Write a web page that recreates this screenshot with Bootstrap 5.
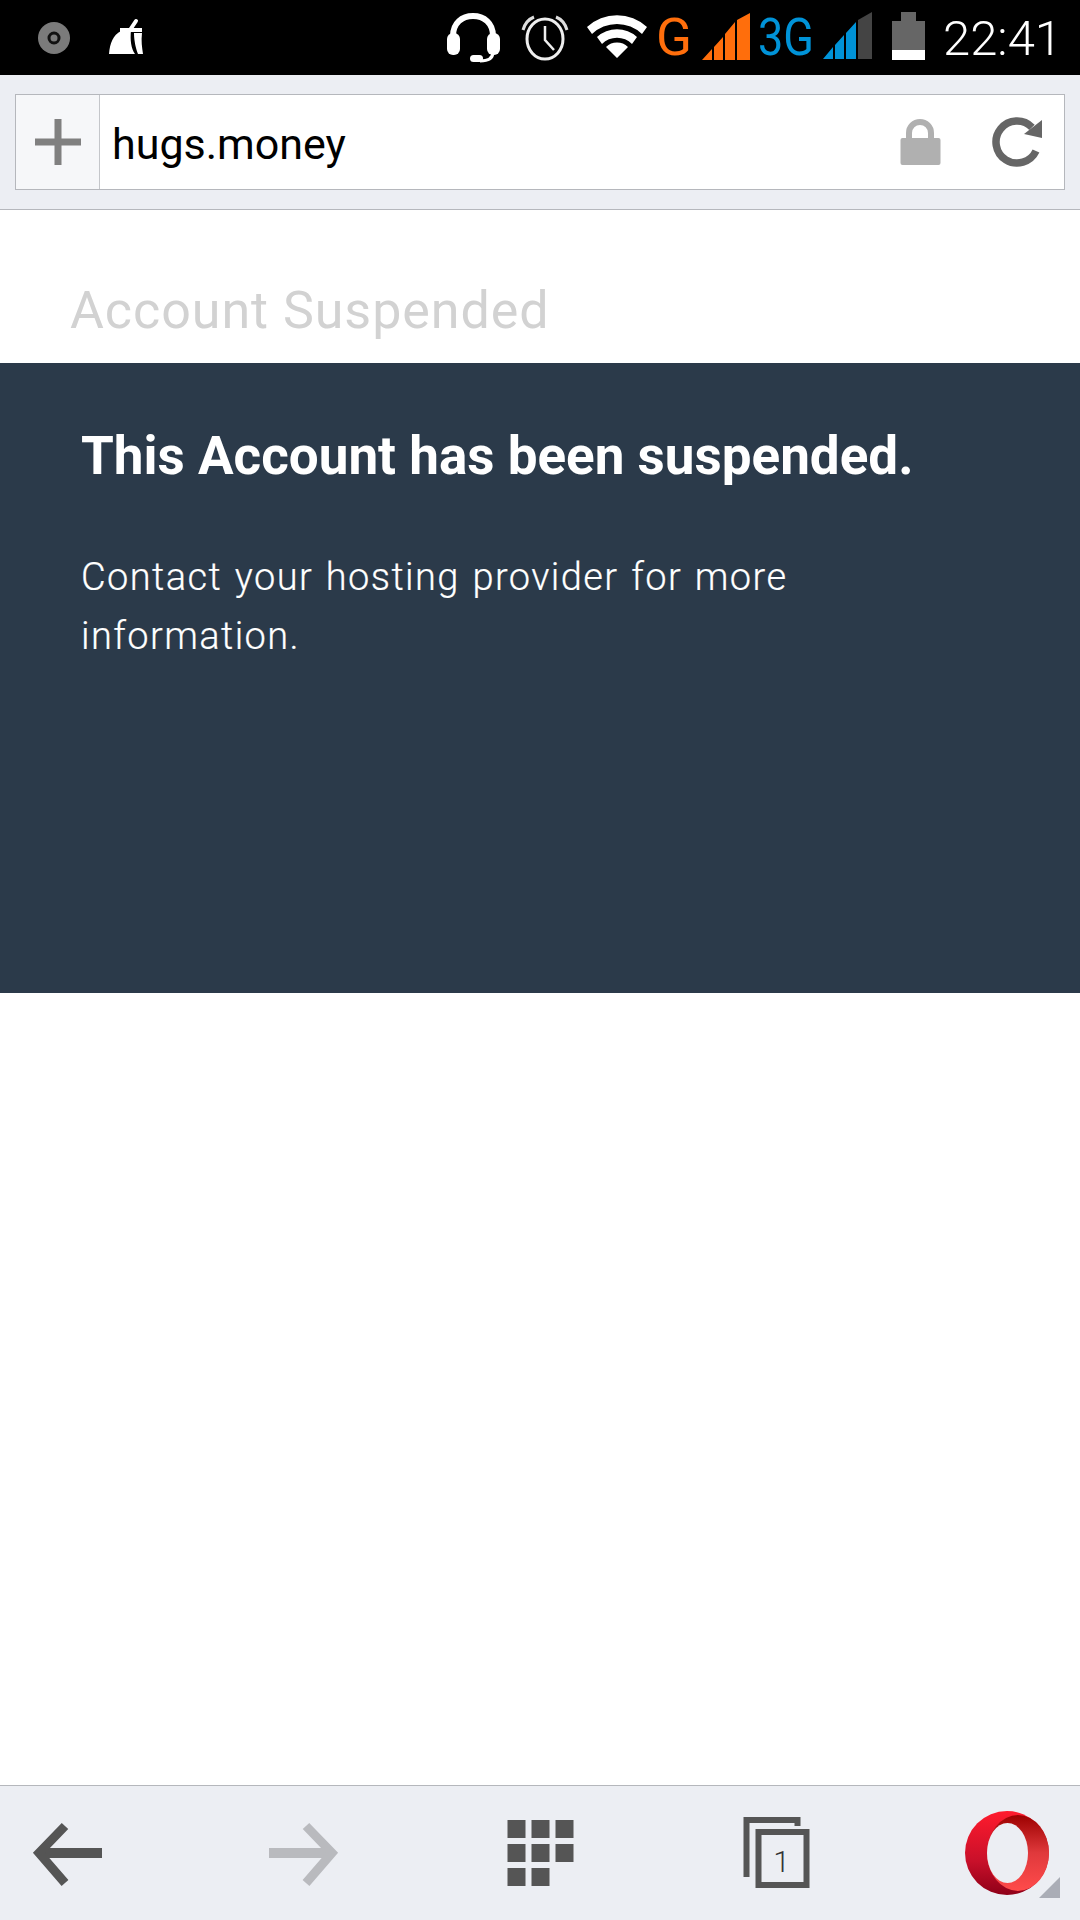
<!DOCTYPE html>
<html lang="en"><head><meta charset="utf-8"><title>hugs.money</title>
<link href="https://cdn.jsdelivr.net/npm/bootstrap@5.3.0/dist/css/bootstrap.min.css" rel="stylesheet">
<style>
body{font-family:Roboto,"Liberation Sans",sans-serif;background:#fff;}
.shell{height:1920px;}
.statusbar{height:75px;background:#000;color:#fff;}
.statusbar svg{display:block;flex:none;}
.clock{font-size:49px;font-weight:300;line-height:1;width:115px;margin-left:18px;margin-right:22px;white-space:nowrap;padding-top:2px;}
.topbar{height:135px;background:#eceef3;border-bottom:1px solid #b5b7bc;padding:19px 15px 20px;}
.urlbox{height:96px;background:#fff;border:1px solid #b5b7bc;}
.pluscell{width:84px;background:#f6f7f9;border-right:1px solid #c4c6ca;}
.urltext{font-size:43px;color:#000;padding:4px 0 0 12px;}
.pagehead{height:153px;padding:70px 0 0 70px;}
.pagehead h1{font-size:52px;font-weight:400;color:#d2d2d2;margin:0;line-height:62px;letter-spacing:.95px;}
.band{height:630px;background:#2b3a4a;color:#fff;padding:49px 81px 0;}
.band h2{font-size:53px;font-weight:700;margin:0;line-height:88px;}
.band p{font-size:38px;font-weight:300;line-height:59px;margin:48px 0 0;letter-spacing:1.4px;word-spacing:2px;width:860px;-webkit-text-stroke:.2px #fff;}
.bottombar{height:135px;background:#eceef3;border-top:1px solid #b5b7bc;}
.bottombar svg{display:block;width:135px;height:134px;}
</style></head>
<body>
<div class="shell d-flex flex-column">
  <div class="statusbar d-flex align-items-center">
    <svg width="150" height="75" viewBox="0 0 150 75">
      <circle cx="54" cy="38" r="16" fill="#7b7b7b"/><circle cx="54" cy="38" r="5" fill="#7b7b7b" stroke="#111" stroke-width="3"/>
      <path d="M109 54c1-11 4-19 12-23l10-1c-1 10 0 18 4 24z M134 33h8c-1 8 0 14 1 21h-5c-2-5-4-13-4-21z M120 28h22v4h-22z" fill="#fff"/>
      <path d="M130 30l6-9" stroke="#fff" stroke-width="4" stroke-linecap="round"/>
    </svg>
    <div class="flex-grow-1"></div>
    <svg width="495" height="75" viewBox="430 0 495 75">
      <path d="M453 44V36c0-13 9-20 20-20s20 7 20 20v8" fill="none" stroke="#fff" stroke-width="6"/>
      <rect x="447" y="33" width="13" height="22" rx="6" fill="#fff"/><rect x="487" y="33" width="13" height="22" rx="6" fill="#fff"/>
      <path d="M493 52c0 7-5 9-13 9" fill="none" stroke="#fff" stroke-width="3"/><rect x="470" y="55" width="13" height="7" rx="3.5" fill="#fff"/>
      <ellipse cx="545" cy="39" rx="18" ry="20" fill="none" stroke="#eee" stroke-width="3"/>
      <path d="M545 26v14l9 10" fill="none" stroke="#eee" stroke-width="2.5"/>
      <path d="M523 30c2-7 6-11 11-13M567 30c-2-7-6-11-11-13" fill="none" stroke="#ddd" stroke-width="3"/>
      <path d="M587 27a44 44 0 0 1 60 0l-5 7a36 36 0 0 0-50 0z M597 37a30 30 0 0 1 40 0l-5 7a21 21 0 0 0-30 0z M606 47a16 16 0 0 1 22 0l-11 11z" fill="#fff"/>
      <text x="656" y="55" font-family="Roboto,sans-serif" font-size="52" fill="#ff6e0c" textLength="36" lengthAdjust="spacingAndGlyphs">G</text>
      <path d="M702 60l10-11v11zM714 60V47l9-10v23zM725 60V34l10-12v38zM737 60V20l13-7v47z" fill="#ff6e0c"/>
      <text x="758" y="55" font-family="Roboto,sans-serif" font-size="52" fill="#0093d8" textLength="56" lengthAdjust="spacingAndGlyphs">3G</text>
      <path d="M823 59l10-12v12zM835 59V45l9-10v24zM846 59V33l10-11v37z" fill="#0093d8"/><path d="M858 59V20l14-8v47z" fill="#444"/>
      <path d="M892 21h9v-9h15v9h9v29h-33z" fill="#666"/><rect x="892" y="50" width="33" height="10" fill="#fff"/>
    </svg>
    <div class="clock">22:41</div>
  </div>

  <div class="topbar">
    <div class="urlbox d-flex align-items-stretch">
      <div class="pluscell d-flex align-items-center justify-content-center">
        <svg width="46" height="46" viewBox="0 0 46 46"><path d="M23 0v46M0 23h46" stroke="#808080" stroke-width="7"/></svg>
      </div>
      <div class="urltext flex-grow-1 d-flex align-items-center">hugs.money</div>
      <svg class="align-self-center" width="174" height="60" viewBox="890 112 174 60">
        <path d="M909 140v-7a11 11 0 0 1 22 0v7" fill="none" stroke="#b0b0b0" stroke-width="6"/>
        <rect x="900.5" y="138" width="40" height="27" rx="2" fill="#b0b0b0"/>
        <path d="M1032 127.3a21 21 0 1 0 4 23.7" fill="none" stroke="#666" stroke-width="7.5"/>
        <path d="M1042 120v18l-18-4z" fill="#666"/>
      </svg>
    </div>
  </div>

  <div class="pagehead"><h1>Account Suspended</h1></div>
  <div class="band">
    <h2>This Account has been suspended.</h2>
    <p>Contact your hosting provider for more information.</p>
  </div>
  <div class="flex-grow-1"></div>

  <div class="bottombar d-flex justify-content-between">
    <svg viewBox="0 1786 135 134"><path d="M102 1853H38" fill="none" stroke="#555" stroke-width="10"/><path d="M65 1826l-26 27 26 30" fill="none" stroke="#555" stroke-width="9"/></svg>
    <svg viewBox="236 1786 135 134"><path d="M269 1853h64" fill="none" stroke="#b9babe" stroke-width="10"/><path d="M306 1826l26 27-26 30" fill="none" stroke="#b9babe" stroke-width="9"/></svg>
    <svg viewBox="472.5 1786 135 134"><path d="M507 1820h18v18h-18zM531 1820h18v18h-18zM555 1820h18v18h-18zM507 1844h18v18h-18zM531 1844h18v18h-18zM555 1844h18v18h-18zM507 1868h18v18h-18zM531 1868h18v18h-18z" fill="#555"/></svg>
    <svg viewBox="708.5 1786 135 134">
      <path d="M746 1877v-57h51v6" fill="none" stroke="#555" stroke-width="6"/>
      <rect x="758" y="1832" width="48" height="53" fill="#eceef3" stroke="#555" stroke-width="6"/>
      <text x="781" y="1872" text-anchor="middle" font-family="Roboto,sans-serif" font-size="30" font-weight="300" fill="#333">1</text>
    </svg>
    <svg viewBox="945 1786 135 134">
      <defs>
        <linearGradient id="opA" x1="0" y1="0" x2="0" y2="1"><stop offset="0" stop-color="#ff1b2d"/><stop offset=".6" stop-color="#c8102a"/><stop offset="1" stop-color="#8f0018"/></linearGradient>
        <linearGradient id="opB" x1="0" y1="0" x2="0" y2="1"><stop offset="0" stop-color="#9c0000"/><stop offset=".5" stop-color="#e0393c"/><stop offset="1" stop-color="#ff4b4b"/></linearGradient>
      </defs>
      <circle cx="1007" cy="1853" r="42" fill="url(#opA)"/>
      <ellipse cx="1018" cy="1853" rx="31" ry="38" fill="url(#opB)"/>
      <ellipse cx="1007.5" cy="1853" rx="20.5" ry="30" fill="#eceef3"/>
      <path d="M1060 1877v21h-21z" fill="#aaadb6"/>
    </svg>
  </div>
</div>
<script src="https://cdn.jsdelivr.net/npm/bootstrap@5.3.0/dist/js/bootstrap.bundle.min.js"></script>
</body></html>
